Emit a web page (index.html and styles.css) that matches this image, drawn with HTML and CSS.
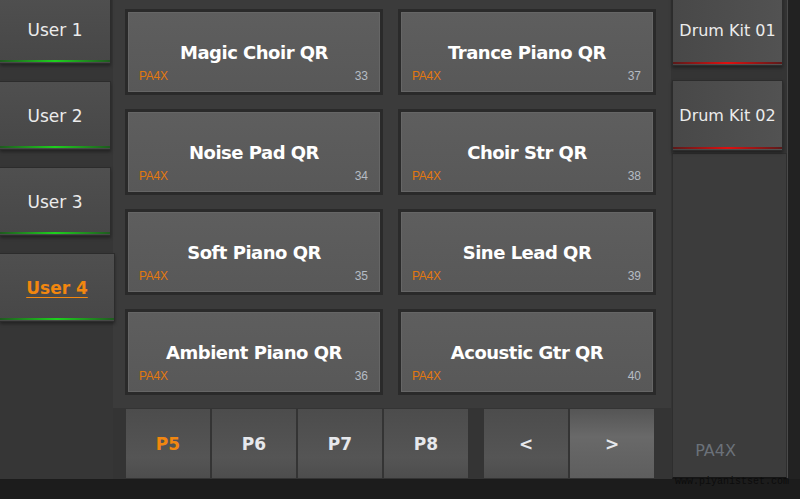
FILE: index.html
```html
<!DOCTYPE html>
<html lang="en">
<head>
  <meta charset="UTF-8">
  <title>PA4X - Sound Select</title>
  <link rel="stylesheet" href="styles.css">
</head>
<body>
  <div class="screen">
    <!-- User banks -->
    <div class="bank-col">
      <div class="bank-btn">User 1</div>
      <div class="bank-btn">User 2</div>
      <div class="bank-btn">User 3</div>
      <div class="bank-btn active">User 4</div>
    </div>

    <!-- Sound grid + pages -->
    <div class="center-col">
      <div class="sound-panel">
        <div class="sound-card"><div class="sound-name">Magic Choir QR</div><div class="sound-meta"><span class="sound-tag">PA4X</span><span class="sound-num">33</span></div></div>
        <div class="sound-card"><div class="sound-name">Trance Piano QR</div><div class="sound-meta"><span class="sound-tag">PA4X</span><span class="sound-num">37</span></div></div>
        <div class="sound-card"><div class="sound-name">Noise Pad QR</div><div class="sound-meta"><span class="sound-tag">PA4X</span><span class="sound-num">34</span></div></div>
        <div class="sound-card"><div class="sound-name">Choir Str QR</div><div class="sound-meta"><span class="sound-tag">PA4X</span><span class="sound-num">38</span></div></div>
        <div class="sound-card"><div class="sound-name">Soft Piano QR</div><div class="sound-meta"><span class="sound-tag">PA4X</span><span class="sound-num">35</span></div></div>
        <div class="sound-card"><div class="sound-name">Sine Lead QR</div><div class="sound-meta"><span class="sound-tag">PA4X</span><span class="sound-num">39</span></div></div>
        <div class="sound-card"><div class="sound-name">Ambient Piano QR</div><div class="sound-meta"><span class="sound-tag">PA4X</span><span class="sound-num">36</span></div></div>
        <div class="sound-card"><div class="sound-name">Acoustic Gtr QR</div><div class="sound-meta"><span class="sound-tag">PA4X</span><span class="sound-num">40</span></div></div>
      </div>
      <div class="page-row">
        <div class="page-tabs">
          <div class="page-btn active">P5</div>
          <div class="page-btn">P6</div>
          <div class="page-btn">P7</div>
          <div class="page-btn">P8</div>
        </div>
        <div class="page-tabs">
          <div class="page-btn">&lt;</div>
          <div class="page-btn hover">&gt;</div>
        </div>
      </div>
    </div>

    <!-- Drum kits -->
    <div class="kit-col">
      <div class="kit-btn">Drum Kit 01</div>
      <div class="kit-btn">Drum Kit 02</div>
      <div class="kit-panel"><span class="brand">PA4X</span></div>
    </div>
    <div class="edge"></div>
  </div>
  <div class="footer"><span class="site">www.piyanistset.com</span></div>
</body>
</html>
```

FILE: styles.css
```css
body {
  margin: 0;
  background: #1c1c1c;
  font-family: 'DejaVu Sans', sans-serif;
  color: #eee;
}
.screen {
  display: flex;
  height: 479px;
  background: #343434;
  overflow: hidden;
}
/* Left: user banks */
.bank-col {
  width: 113px;
  display: flex;
  flex-direction: column;
  gap: 17px;
  margin-top: -5px;
  background: #363636;
}
.bank-btn {
  position: relative;
  width: 111px;
  height: 69px;
  box-sizing: border-box;
  border: 1px solid #2c2c2c;
  border-left: none;
  background: linear-gradient(#4f4f4f, #474747);
  display: flex;
  align-items: center;
  justify-content: center;
  font-size: 17px;
  color: #ececec;
  box-shadow: 0 2px 3px rgba(0,0,0,0.35);
}
.bank-btn::after {
  content: "";
  position: absolute;
  left: 0;
  right: 0;
  bottom: 1px;
  height: 2px;
  background: linear-gradient(90deg, #1f5a1f, #1ed01e 50%, #1f5a1f);
}
.bank-btn.active {
  width: 115px;
  color: #f2870f;
  font-weight: bold;
  text-decoration: underline;
  text-underline-offset: 3px;
}
/* Center: sound grid */
.center-col {
  width: 558px;
  display: flex;
  flex-direction: column;
}
.sound-panel {
  height: 408px;
  box-sizing: border-box;
  padding: 9px 14px 13px 12px;
  background: #3b3b3b;
  display: grid;
  grid-template-columns: 258px 258px;
  grid-template-rows: repeat(4, 86px);
  column-gap: 15px;
  row-gap: 14px;
}
.sound-card {
  position: relative;
  border: 3px solid #2a2a2a;
  background: linear-gradient(#5e5e5e, #585858);
  box-shadow: inset 0 0 0 1px #666;
  display: flex;
  align-items: center;
  justify-content: center;
}
.sound-name {
  font-family: 'DejaVu Sans', sans-serif;
  font-weight: bold;
  font-size: 18px;
  letter-spacing: -0.5px;
  color: #fff;
  margin-top: 1px;
}
.sound-meta {
  position: absolute;
  left: 11px;
  right: 12px;
  bottom: 9px;
  display: flex;
  justify-content: space-between;
  font-family: 'Liberation Sans', sans-serif;
  font-size: 12px;
}
.sound-tag {
  color: #e2780f;
  letter-spacing: -0.3px;
}
.sound-num {
  color: #b5bcc4;
}
/* Page tabs */
.page-row {
  flex: 1;
  display: flex;
  gap: 16px;
  padding-left: 13px;
  padding-top: 1px;
}
.page-tabs {
  display: flex;
  gap: 2px;
}
.page-btn {
  width: 84px;
  height: 69px;
  background: linear-gradient(#4c4c4c, #555 70%, #4d4d4d);
  display: flex;
  align-items: center;
  justify-content: center;
  font-family: 'DejaVu Sans', sans-serif;
  font-weight: bold;
  font-size: 17px;
  color: #e6e8ec;
}
.page-btn.active {
  color: #f2870f;
}
.page-btn.hover {
  background: linear-gradient(#555, #696969 40%, #5e5e5e);
}
/* Right: drum kits */
.kit-col {
  width: 115px;
  margin-left: 1px;
  display: flex;
  flex-direction: column;
  gap: 14px;
  margin-top: -5px;
}
.kit-btn {
  position: relative;
  width: 111px;
  height: 71px;
  box-sizing: border-box;
  border: 1px solid #2c2c2c;
  background: linear-gradient(90deg, #484848, #525252);
  display: flex;
  align-items: center;
  justify-content: center;
  font-size: 16px;
  color: #ececec;
  box-shadow: 0 2px 3px rgba(0,0,0,0.35);
}
.kit-btn::after {
  content: "";
  position: absolute;
  left: 0;
  right: 0;
  bottom: 1px;
  height: 2px;
  background: linear-gradient(90deg, #5a1a1a, #e01010 50%, #5a1a1a);
}
.kit-panel {
  flex: 1;
  margin-top: -12px;
  border: 1px solid #2e2e2e;
  border-bottom: 2px solid #161616;
  background: #3c3c3c;
  display: flex;
  align-items: flex-end;
  justify-content: center;
  padding-bottom: 17px;
}
.brand {
  font-family: 'DejaVu Sans', sans-serif;
  font-size: 16px;
  color: #6b7179;
  margin-left: -28px;
}
.edge {
  flex: 1;
  background: #222;
  border-left: 1px solid #4a4a4a;
}
.footer {
  position: relative;
  height: 20px;
}
.site {
  position: absolute;
  left: 675px;
  top: -3px;
  font-family: 'Liberation Mono', monospace;
  font-size: 10px;
  color: #0c0c0c;
}
```
